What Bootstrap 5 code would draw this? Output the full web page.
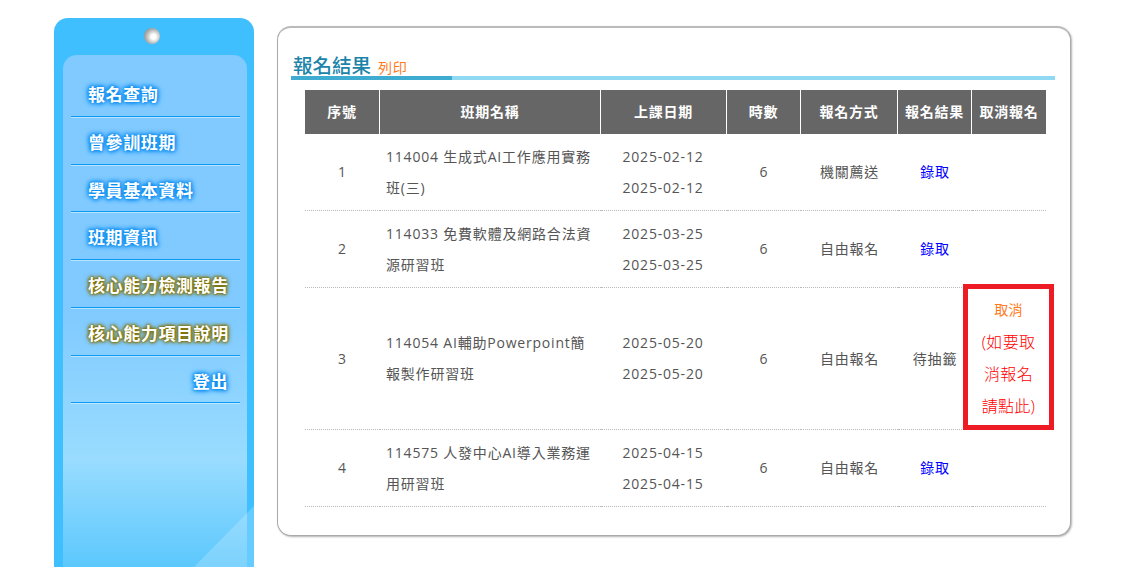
<!DOCTYPE html>
<html lang="zh-Hant">
<head>
    <meta charset="UTF-8">
    <meta name="viewport" content="width=device-width, initial-scale=1.0">
    <title>報名結果</title>
    <link href="https://cdn.jsdelivr.net/npm/bootstrap@5.3.0/dist/css/bootstrap.min.css" rel="stylesheet">
    <script src="https://cdn.jsdelivr.net/npm/bootstrap@5.3.0/dist/js/bootstrap.bundle.min.js"></script>
    <style>
        html, body { height: 100%; overflow: hidden; }
        body {
            background: #fff;
            color: #555;
            font-family: "Open Sans", "Noto Sans CJK TC", sans-serif;
            font-size: 14px;
            letter-spacing: .8px;
        }
        .page-wrap { padding: 18px 0 0 54px; gap: 23px; height: 100%; overflow: hidden; }

        /* sidebar */
        .side-tag {
            position: relative;
            width: 200px;
            height: 549px;
            flex: none;
            padding: 37px 7px 0 9px;
            background: #40bfff;
            border-radius: 14px 14px 0 0;
            overflow: hidden;
        }
        .side-hole {
            position: absolute;
            top: 10px;
            left: 90px;
            width: 16px;
            height: 16px;
            border-radius: 50%;
            background: radial-gradient(circle at 60% 55%, #fff 0 18%, #b5b5b5 55%, #6f6f6f 100%);
        }
        .side-inner {
            height: 100%;
            padding: 14px 7px 0 8px;
            border-radius: 14px 14px 0 0;
            background: linear-gradient(#80caff 0, #80caff 50%, #99dcff 79%, #5cc8fd 100%);
        }
        .side-shine { position: absolute; right: 0; top: 480px; }
        .side-link {
            display: block;
            height: 47.75px;
            padding: 14px 0 0 17px;
            color: #fff;
            font-size: 17px;
            line-height: 23px;
            font-weight: bold;
            letter-spacing: .6px;
            text-decoration: none;
            text-shadow: 0 0 3px #0a8cf0, 0 0 4px #0a8cf0, 0 0 5px #0a8cf0, 0 0 6px #0a8cf0;
            border-bottom: 1px solid #0a9bf5;
            box-shadow: 0 1px 0 rgba(255,255,255,.45);
        }
        .side-link.gold { text-shadow: 0 0 2px #7f7000, 0 0 3px #7f7000, 0 0 4px #7f7000, 0 0 5px #7f7000; }
        .side-link.logout { text-align: right; padding-right: 12px; padding-left: 0; }

        /* main card */
        .main-box {
            width: 794px;
            height: 510px;
            margin-top: 8px;
            padding: 24px 15px 0 13px;
            flex: none;
            background: #fff;
            border: 1px solid #aaa;
            border-top: 2px solid #bbb;
            border-radius: 14px;
            box-shadow: 1px 1px 2px rgba(0,0,0,.3);
        }
        .box-title {
            height: 24px;
            margin: 0;
            padding-left: 2px;
            color: #1c84a8;
            font-size: 19.5px;
            line-height: 27px;
            font-weight: 500;
            letter-spacing: 0;
        }
        .box-title a { margin-left: 2px; color: #ff7a1a; font-size: 14px; font-weight: normal; text-decoration: none; letter-spacing: .6px; }
        .title-rule { height: 4px; background: #8fd9f3; margin-bottom: 10px; }
        .title-rule div { width: 161px; height: 100%; background: #3eabd0; }

        .result-table {
            width: 741px;
            margin-left: 14px;
            table-layout: fixed;
            border-collapse: separate;
            border-spacing: 0;
        }
        .result-table th {
            height: 44px;
            background: #666;
            color: #fff;
            font-weight: bold;
            text-align: center;
            vertical-align: middle;
            border-right: 1px solid #fff;
            padding: 0 0 2px;
        }
        .result-table th:last-child { border-right: 0; }
        .result-table td {
            padding: 0 0 1px;
            line-height: 31px;
            text-align: center;
            vertical-align: middle;
            border-bottom: 1px dotted #bbb;
        }
        .result-table td.course-name { text-align: left; padding: 0 7px 1px 6px; }
        .result-table td.date-cell { padding-right: 2px; }
        .row-a { height: 77px; }
        .row-b { height: 142px; }
        .ok-link { color: #00f; text-decoration: none; }
        .cancel-cell { position: relative; }
        .cancel-box {
            position: absolute;
            left: -9px;
            top: -4px;
            width: 91px;
            height: 146px;
            border: 5px solid #ed1c24;
            padding: 5px 12px 0;
            line-height: 32px;
            color: #f00;
            font-size: 16px;
            font-weight: 300;
            letter-spacing: .3px;
        }
        .cancel-box a { display: block; color: #ff7a1a; font-size: 14px; font-weight: normal; text-decoration: none; }
    </style>
</head>
<body>
    <div class="d-flex align-items-start page-wrap">
        <div class="side-tag">
            <div class="side-hole"></div>
            <div class="side-inner">
                <a class="side-link" href="#">報名查詢</a>
                <a class="side-link" href="#">曾參訓班期</a>
                <a class="side-link" href="#">學員基本資料</a>
                <a class="side-link" href="#">班期資訊</a>
                <a class="side-link gold" href="#">核心能力檢測報告</a>
                <a class="side-link gold" href="#">核心能力項目說明</a>
                <a class="side-link logout" href="#">登出</a>
            </div>
            <svg class="side-shine" width="60" height="69" viewBox="0 0 60 69">
                <path d="M0 69 L60 8 V69 Z" fill="#fff" fill-opacity=".2"/>
            </svg>
        </div>

        <div class="main-box">
            <h2 class="box-title">報名結果 <a href="#">列印</a></h2>
            <div class="title-rule"><div></div></div>
            <table class="result-table">
                <colgroup>
                    <col style="width:75px"><col style="width:221px"><col style="width:126px"><col style="width:74px"><col style="width:97px"><col style="width:74px"><col style="width:74px">
                </colgroup>
                <thead>
                    <tr><th>序號</th><th>班期名稱</th><th>上課日期</th><th>時數</th><th>報名方式</th><th>報名結果</th><th>取消報名</th></tr>
                </thead>
                <tbody>
                    <tr class="row-a">
                        <td>1</td>
                        <td class="course-name">114004 生成式AI工作應用實務班(三)</td>
                        <td class="date-cell">2025-02-12<br>2025-02-12</td>
                        <td>6</td>
                        <td>機關薦送</td>
                        <td><a class="ok-link" href="#">錄取</a></td>
                        <td></td>
                    </tr>
                    <tr class="row-a">
                        <td>2</td>
                        <td class="course-name">114033 免費軟體及網路合法資源研習班</td>
                        <td class="date-cell">2025-03-25<br>2025-03-25</td>
                        <td>6</td>
                        <td>自由報名</td>
                        <td><a class="ok-link" href="#">錄取</a></td>
                        <td></td>
                    </tr>
                    <tr class="row-b">
                        <td>3</td>
                        <td class="course-name">114054 AI輔助Powerpoint簡報製作研習班</td>
                        <td class="date-cell">2025-05-20<br>2025-05-20</td>
                        <td>6</td>
                        <td>自由報名</td>
                        <td>待抽籤</td>
                        <td class="cancel-cell">
                            <div class="cancel-box"><a href="#">取消</a>(如要取消報名請點此)</div>
                        </td>
                    </tr>
                    <tr class="row-a">
                        <td>4</td>
                        <td class="course-name">114575 人發中心AI導入業務運用研習班</td>
                        <td class="date-cell">2025-04-15<br>2025-04-15</td>
                        <td>6</td>
                        <td>自由報名</td>
                        <td><a class="ok-link" href="#">錄取</a></td>
                        <td></td>
                    </tr>
                </tbody>
            </table>
        </div>
    </div>
</body>
</html>
